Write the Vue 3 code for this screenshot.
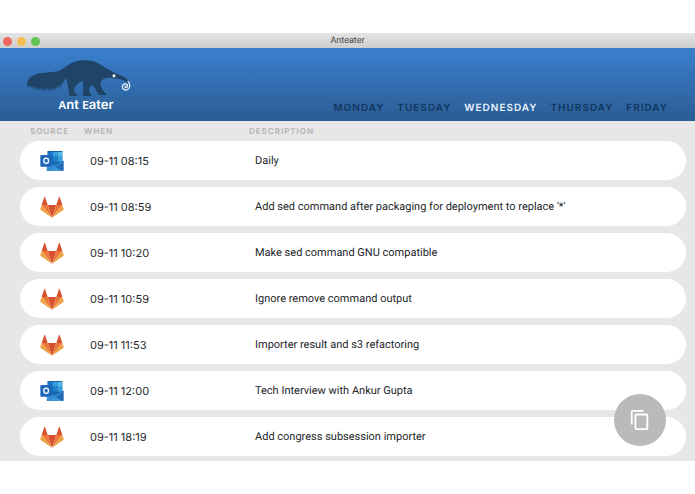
<script setup>
import { ref } from 'vue'

const days = ['Monday', 'Tuesday', 'Wednesday', 'Thursday', 'Friday']
const active = ref('Wednesday')

const entries = [
  { source: 'outlook', when: '09-11 08:15', description: 'Daily' },
  { source: 'gitlab', when: '09-11 08:59', description: "Add sed command after packaging for deployment to replace '*'" },
  { source: 'gitlab', when: '09-11 10:20', description: 'Make sed command GNU compatible' },
  { source: 'gitlab', when: '09-11 10:59', description: 'Ignore remove command output' },
  { source: 'gitlab', when: '09-11 11:53', description: 'Importer result and s3 refactoring' },
  { source: 'outlook', when: '09-11 12:00', description: 'Tech Interview with Ankur Gupta' },
  { source: 'gitlab', when: '09-11 18:19', description: 'Add congress subsession importer' },
]
</script>

<template>
  <div class="page">
    <div class="window">
      <div class="titlebar">
        <div class="lights">
          <span class="light red"></span>
          <span class="light yellow"></span>
          <span class="light green"></span>
        </div>
        <span class="title">Anteater</span>
      </div>

      <header class="header">
        <div class="logo">
          <svg class="anteater" viewBox="78 101 318 114" aria-hidden="true">
            <path
              fill="#1f4468"
              d="M81 178C82 160 96 149 118 144C140 140 160 142 178 136C192 130 202 119 220 111C236 104 254 103 272 106C292 109 305 120 318 128C330 136 342 141 352 146C366 152 378 156 384 165C386 169 384 173 380 171C370 163 356 160 344 159C332 156 318 157 311 161C303 165 301 171 302 178C304 190 310 199 319 205V209H296C291 198 284 186 275 179C270 184 267 191 267 198C268 203 272 205 274 207V212H248C251 195 250 181 249 167C240 169 230 177 224 186C221 194 222 202 231 208V212H208C206 192 202 172 197 155C196 164 190 172 184 177L182 188L178 179L175 191L171 182L168 194L164 184L161 196L157 186L154 198L150 188L146 199L143 188L139 199L135 188L131 199L128 187L124 198L121 186L117 197L114 185L110 195L107 183L103 193L100 181L96 190L93 180L89 188L87 178L84 185Z"
            />
            <circle cx="342" cy="151" r="4.5" fill="#fff" />
            <path
              fill="none"
              stroke="#edf4fb"
              stroke-width="3.6"
              stroke-linecap="round"
              d="M384 168C391 174 391 187 384 192C377 197 367 192 367 184C367 177 375 173 380 177C385 181 382 188 377 187C374 186 374 183 377 182"
            />
          </svg>
          <span class="wordmark"><span class="cap">A</span>nt <span class="cap">E</span>ater</span>
        </div>
        <nav class="days">
          <a
            v-for="day in days"
            :key="day"
            href="#"
            class="day"
            :class="{ active: day === active }"
            @click.prevent="active = day"
          >{{ day }}</a>
        </nav>
      </header>

      <main class="content">
        <table class="log">
          <thead>
            <tr>
              <th scope="col">Source</th>
              <th scope="col">When</th>
              <th scope="col">Description</th>
            </tr>
          </thead>
          <tbody>
            <tr v-for="entry in entries" :key="entry.when">
              <td>
                <svg v-if="entry.source === 'outlook'" class="icon" viewBox="0 0 72 66" role="img" aria-label="Outlook">
                  <rect x="23" y="3" width="44" height="46" rx="2" fill="#1066b5" />
                  <rect x="23" y="5" width="15" height="15" fill="#1877c8" />
                  <rect x="38" y="5" width="15" height="15" fill="#3a9fdc" />
                  <rect x="53" y="5" width="14" height="15" fill="#56bdea" />
                  <rect x="23" y="20" width="15" height="15" fill="#1763b0" />
                  <rect x="38" y="20" width="15" height="15" fill="#2080cb" />
                  <rect x="53" y="20" width="14" height="15" fill="#389fdc" />
                  <rect x="38" y="35" width="15" height="14" fill="#1b66b2" />
                  <path d="M23 3h44v3H23z" fill="#1c62a8" />
                  <path d="M20 34L71 62Q70 63 67 63H23Q20 63 20 60Z" fill="#3d9adb" />
                  <path d="M71 32V60Q71 63 67 63L40 47Z" fill="#2469b3" />
                  <path d="M20 60L71 32V36L28 63H23Q20 63 20 60Z" fill="#3388d0" />
                  <rect x="1" y="15" width="35" height="35" rx="3" fill="#1e67b8" />
                  <ellipse cx="18.500" cy="32.500" rx="7" ry="8" fill="none" stroke="#fff" stroke-width="4" />
                </svg>
                <svg v-else class="icon" viewBox="0 0 72 66" role="img" aria-label="GitLab">
                  <path d="M36 65L49 27H23Z" fill="#d4502f" />
                  <path d="M36 65L23 27H5Z" fill="#ea7638" />
                  <path d="M5 27L1 39Q0 41 3 43L36 65Z" fill="#f0a144" />
                  <path d="M5 27H23L15 3Q14 1 13 3Z" fill="#d4502f" />
                  <path d="M36 65L49 27H67Z" fill="#ea7638" />
                  <path d="M67 27L71 39Q72 41 69 43L36 65Z" fill="#f0a144" />
                  <path d="M67 27H49L57 3Q58 1 59 3Z" fill="#d4502f" />
                </svg>
              </td>
              <td>{{ entry.when }}</td>
              <td class="description">{{ entry.description }}</td>
            </tr>
          </tbody>
        </table>
        <button class="copy" type="button" aria-label="Copy">
          <svg viewBox="0 0 24 24" aria-hidden="true">
            <path
              fill="#fff"
              d="M16 1H4C2.900 1 2 1.900 2 3v14h2V3h12V1zm3 4H8c-1.100 0-2 .9-2 2v14c0 1.100.9 2 2 2h11c1.100 0 2-.9 2-2V7c0-1.100-.9-2-2-2zm0 16H8V7h11v14z"
            />
          </svg>
        </button>
      </main>
    </div>
  </div>
</template>

<style>
body {
  background: #fff;
}
</style>

<style scoped>
.page {
  padding: 33px 0;
  font-family: Inter, "Liberation Sans", sans-serif;
  text-rendering: geometricPrecision;
}

.titlebar {
  display: grid;
  grid-template-columns: 1fr auto 1fr;
  align-items: center;
  height: 15px;
  background: linear-gradient(#e4e4e4, #cecece);
}

.lights {
  display: flex;
  gap: 5px;
  padding-left: 3px;
}

.light {
  width: 9px;
  height: 9px;
  border-radius: 50%;
}

.red {
  background: #ed695e;
}

.yellow {
  background: #f5bf4f;
}

.green {
  background: #61c554;
}

.title {
  font-family: Roboto, sans-serif;
  font-size: 9px;
  line-height: 16px;
  color: #484848;
}

.header {
  display: flex;
  justify-content: space-between;
  align-items: flex-end;
  height: 73px;
  box-sizing: border-box;
  padding: 0 27px 6px 26px;
  background: linear-gradient(#3a7fce, #2b5d94);
}

.logo {
  display: flex;
  flex-direction: column;
  width: 120px;
  padding-bottom: 2px;
}

.anteater {
  width: 106px;
  height: 38px;
}

.wordmark {
  align-self: center;
  font-size: 13px;
  line-height: 16px;
  font-weight: 600;
  color: #fff;
}

.cap {
  font-size: 11px;
}

.days {
  display: flex;
  gap: 13px;
}

.day {
  font-size: 10px;
  line-height: 14px;
  font-weight: 600;
  letter-spacing: 1px;
  text-transform: uppercase;
  text-decoration: none;
  color: #11355d;
}

.day.active {
  color: #eaf3fd;
}

.content {
  position: relative;
  padding: 4px 9px 5px 20px;
  background: #e7e7e7;
}

.log {
  display: block;
}

.log tbody {
  display: flex;
  flex-direction: column;
  gap: 7px;
}

.log thead {
  display: block;
  padding-bottom: 4px;
}

.log tr {
  display: grid;
  grid-template-columns: 60px 165px 1fr;
  align-items: center;
}

.log th {
  padding: 0 0 0 4px;
  text-align: left;
  font-size: 8px;
  line-height: 12px;
  font-weight: 600;
  letter-spacing: 1px;
  text-transform: uppercase;
  color: #b0b0b0;
}

.log th:first-child {
  padding-left: 10px;
}

.log tbody tr {
  height: 39px;
  border-radius: 20px;
  background: #fff;
}

.log td {
  padding: 0 0 0 10px;
  font-size: 11px;
  line-height: 16px;
  color: #24272b;
}

.log td:first-child {
  padding-left: 20px;
}

.log .description {
  font-family: Roboto, "Liberation Sans", sans-serif;
}

.icon {
  display: block;
  width: 24px;
  height: 22px;
}

.copy {
  position: absolute;
  right: 29px;
  bottom: 15px;
  display: flex;
  align-items: center;
  justify-content: center;
  width: 52px;
  height: 52px;
  padding: 0;
  border: 0;
  border-radius: 50%;
  background: #b9babb;
}

.copy svg {
  width: 22px;
  height: 22px;
}
</style>
